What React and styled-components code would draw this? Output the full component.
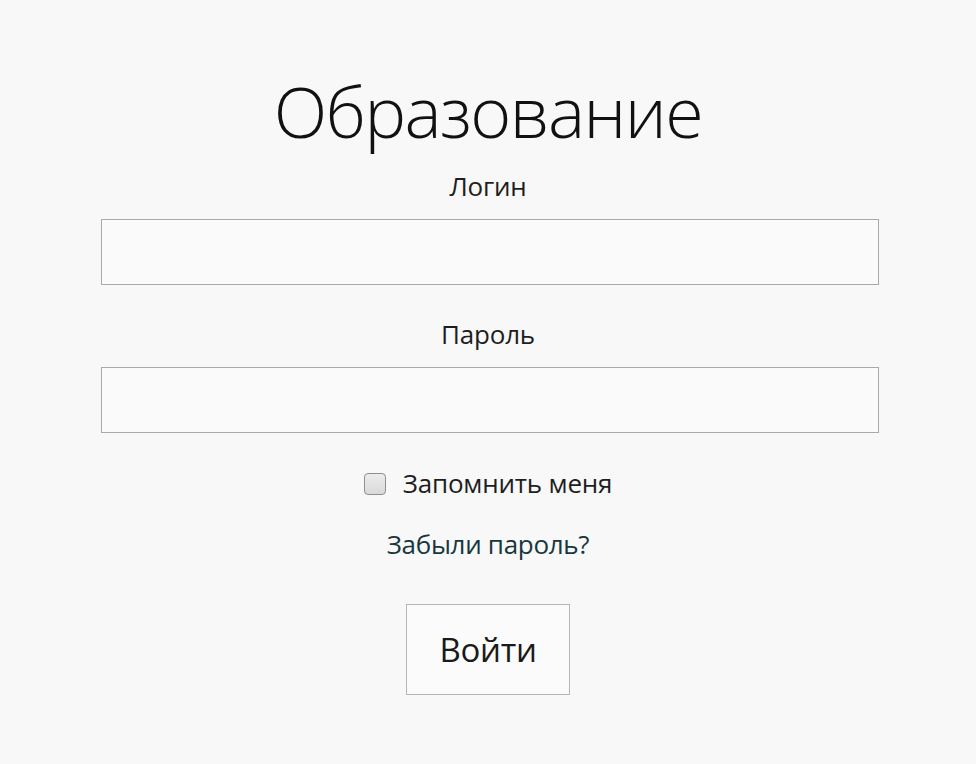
import React from 'react'
import styled, { createGlobalStyle } from 'styled-components'

const GlobalStyle = createGlobalStyle`
    html, body {
        margin: 0;
        padding: 0;
        background-color: #f8f8f8;
    }

    body {
        font-family: 'Open Sans', 'Noto Sans', sans-serif;
        color: #1e1e1e;
    }
`

const Page = styled.div`
    display: flex;
    justify-content: center;
    padding-top: 75px;
`

const Form = styled.form`
    width: 782px;
    display: flex;
    flex-direction: column;
    align-items: center;
`

const Title = styled.h1`
    margin: 0 0 24px;
    font-size: 70px;
    line-height: 72px;
    font-weight: 300;
    letter-spacing: -1.5px;
    color: #111;
`

const Label = styled.label`
    display: block;
    font-size: 26px;
    line-height: 31px;
    font-weight: 400;
    margin-bottom: 17px;
    letter-spacing: -0.2px;
`

const Input = styled.input`
    box-sizing: border-box;
    align-self: flex-end;
    width: 778px;
    height: 66px;
    margin: 0 0 ${p => p.$gap || 0}px;
    border: 1px solid #a9a9a9;
    background-color: #fafafa;
    font-size: 24px;
    padding: 0 14px;
    outline: none;
`

const Remember = styled.label`
    display: flex;
    align-items: center;
    gap: 17px;
    font-size: 26px;
    line-height: 31px;
    letter-spacing: -0.2px;
    margin-bottom: 30px;
`

const Check = styled.input`
    appearance: none;
    margin: 0;
    width: 22px;
    height: 22px;
    border: 1px solid #8f8f8f;
    border-radius: 4px;
    background: linear-gradient(#ececec, #d9d9d9);
`

const Forgot = styled.a`
    font-size: 26px;
    line-height: 31px;
    letter-spacing: -0.3px;
    color: #17373f;
    text-decoration: none;
    margin-bottom: 44px;
`

const Button = styled.button`
    box-sizing: border-box;
    width: 164px;
    height: 91px;
    border: 1px solid #b5b5b5;
    background-color: #fbfbfb;
    font-family: inherit;
    font-size: 33px;
    color: #1a1a1a;
    letter-spacing: -0.3px;
    cursor: pointer;
`

function App() {
    return (
        <Page>
            <GlobalStyle />
            <Form onSubmit={e => e.preventDefault()}>
                <Title>Образование</Title>
                <Label htmlFor='login'>Логин</Label>
                <Input id='login' type='text' $gap={34} />
                <Label htmlFor='password'>Пароль</Label>
                <Input id='password' type='password' $gap={35} />
                <Remember>
                    <Check type='checkbox' />
                    Запомнить меня
                </Remember>
                <Forgot href='#'>Забыли пароль?</Forgot>
                <Button type='submit'>Войти</Button>
            </Form>
        </Page>
    )
}

export default App
